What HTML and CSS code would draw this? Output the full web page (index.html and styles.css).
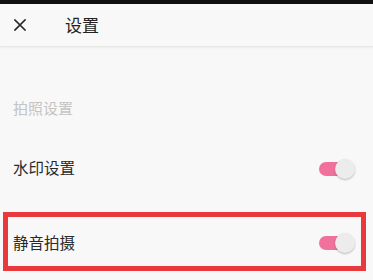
FILE: index.html
```html
<!DOCTYPE html>
<html lang="zh">
<head>
<meta charset="utf-8">
<link rel="stylesheet" href="styles.css">
</head>
<body>
<div class="statusbar"></div>
<header class="header">
  <svg class="close" width="12" height="12" viewBox="0 0 12 12"><path d="M1 1L11 11M11 1L1 11" stroke="#2a2a2a" stroke-width="1.7" fill="none" stroke-linecap="square"/></svg>
  <span class="title">设置</span>
</header>
<div class="section">拍照设置</div>
<div class="row">
  <span class="label">水印设置</span>
  <span class="toggle"><span class="track"></span><span class="knob"></span></span>
</div>
<div class="row highlight">
  <span class="label">静音拍摄</span>
  <span class="toggle"><span class="track"></span><span class="knob"></span></span>
</div>
</body>
</html>
```
FILE: styles.css
```css
html, body {
  margin: 0;
  padding: 0;
  background: #f8f8f8;
  font-family: "Noto Sans CJK SC", "Noto Sans", sans-serif;
  width: 373px;
  height: 280px;
  overflow: hidden;
}
.statusbar {
  height: 4px;
  background: #111;
}
.header {
  height: 42px;
  display: flex;
  align-items: center;
  padding-left: 14px;
  background: #f8f8f8;
  border-bottom: 1px solid #e8e8e8;
  box-shadow: 0 1px 2px rgba(0,0,0,0.06);
}
.close {
  display: block;
}
.title {
  margin-left: 39px;
  font-size: 17px;
  color: #222;
  line-height: 20px;
}
.section {
  margin-top: 51px;
  padding-left: 13px;
  font-size: 15px;
  line-height: 20px;
  color: #c4c4c4;
}
.row {
  margin-top: 24px;
  height: 50px;
  display: flex;
  align-items: center;
  justify-content: space-between;
  padding-left: 13px;
  padding-right: 18px;
}
.label {
  font-size: 15.5px;
  color: #2a2a2a;
}
.row.highlight {
  margin-top: 20px;
  margin-left: 3px;
  width: 363px;
  height: 49px;
  box-sizing: border-box;
  height: 59px;
  border: 5px solid #e83a3c;
  padding-left: 5px;
  padding-right: 6px;
}
.toggle {
  position: relative;
  width: 36px;
  height: 20px;
  display: block;
  margin-top: 3px;
}
.track {
  position: absolute;
  left: 0;
  top: 3px;
  width: 32px;
  height: 14px;
  border-radius: 7px;
  background: #f0719c;
}
.knob {
  position: absolute;
  right: 0;
  top: 0;
  width: 20px;
  height: 20px;
  border-radius: 50%;
  background: #ececec;
  box-shadow: 0 1px 2px rgba(0,0,0,0.25);
}
```
